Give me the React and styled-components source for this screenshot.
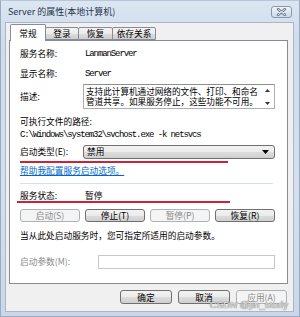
import React from 'react';
import styled, { createGlobalStyle } from 'styled-components';

const GlobalStyle = createGlobalStyle`
  html, body {
    margin: 0;
    padding: 0;
    background: #ffffff;
  }
  body {
    font-family: "Noto Sans CJK SC", "Liberation Sans", sans-serif;
  }
`;

const Window = styled.div`
  position: relative;
  width: 300px;
  height: 317px;
  box-sizing: border-box;
  display: flex;
  flex-direction: column;
  background: linear-gradient(180deg, #dce6f2 0%, #cfdcec 12%, #d4e0ee 60%, #c9d7e8 100%);
  border: 1px solid #9aabc1;
  border-top-color: #b7c6d8;
`;

const TitleBar = styled.div`
  height: 21px;
  flex: none;
  display: flex;
  align-items: center;
  justify-content: space-between;
  padding: 0 7px 0 7px;
`;

const Title = styled.span`
  font-size: 9px;
  color: #27364a;
  white-space: nowrap;
`;

const CloseBtn = styled.div`
  width: 21px;
  height: 12px;
  box-sizing: border-box;
  border: 1px solid #8797ad;
  border-radius: 3px;
  background: linear-gradient(180deg, #f1f5fa 0%, #dde6f1 50%, #cdd9e8 100%);
  display: flex;
  align-items: center;
  justify-content: center;
`;

const Body = styled.div`
  flex: 1;
  display: flex;
  flex-direction: column;
  margin: 0 5px 4px 4px;
  padding: 1px 5px 7px 3px;
  background: #f0f0f0;
  border: 1px solid #a8b6c7;
`;

const TabStrip = styled.div`
  height: 16px;
  flex: none;
  display: flex;
  align-items: flex-end;
  padding-left: 1px;
  position: relative;
  z-index: 2;
`;

const Tab = styled.div`
  width: ${(p) => p.$w}px;
  height: ${(p) => (p.$active ? 17 : 13)}px;
  margin-bottom: ${(p) => (p.$active ? -1 : 0)}px;
  margin-left: ${(p) => (p.$first ? 0 : -1)}px;
  box-sizing: border-box;
  border: 1px solid #898c95;
  border-bottom: ${(p) => (p.$active ? 'none' : '1px solid #898c95')};
  border-radius: 2px 2px 0 0;
  background: ${(p) =>
    p.$active ? '#ffffff' : 'linear-gradient(180deg, #f3f3f3 0%, #ebebeb 50%, #dddddd 51%, #cfcfcf 100%)'};
  font-size: 8.7px;
  color: #000;
  display: flex;
  align-items: ${(p) => (p.$active ? 'flex-start' : 'center')};
  padding-top: ${(p) => (p.$active ? 2 : 0)}px;
  justify-content: center;
  white-space: nowrap;
  overflow: hidden;
`;

const Panel = styled.div`
  flex: 1;
  display: flex;
  flex-direction: column;
  background: #ffffff;
  border: 1px solid #898c95;
  padding: 6px 12px 0 10px;
  font-size: 8.7px;
  color: #000;
  position: relative;
  z-index: 1;
`;

const InfoRow = styled.div`
  display: grid;
  grid-template-columns: 63px 1fr;
  align-items: center;
  min-height: ${(p) => p.$h || 12}px;
  line-height: ${(p) => p.$lh || 12}px;
  margin-top: ${(p) => p.$mt || 0}px;
  white-space: nowrap;
`;

const Label = styled.span`
  color: ${(p) => (p.$disabled ? '#8d8d8d' : '#000')};
`;

const Value = styled.span`
  padding-left: 2px;
`;

const Mono = styled.span`
  font-family: "Liberation Mono", monospace;
  font-size: 9px;
  letter-spacing: -1.1px;
`;

const DescBox = styled.div`
  height: 25px;
  box-sizing: border-box;
  border: 1px solid #abadb3;
  border-top-color: #8e8f8f;
  display: flex;
  padding: 1px 2px 0 2px;
`;

const DescText = styled.div`
  flex: 1;
  font-size: 8.6px;
  line-height: 10px;
  white-space: nowrap;
  overflow: hidden;
`;

const ScrollCol = styled.div`
  width: 9px;
  display: flex;
  flex-direction: column;
  justify-content: space-between;
  align-items: center;
  padding: 3px 0 3px;
`;

const Plain = styled.div`
  line-height: 12px;
  margin-top: ${(p) => p.$mt || 0}px;
  white-space: nowrap;
`;

const Combo = styled.div`
  height: 14px;
  box-sizing: border-box;
  border: 1px solid #707070;
  border-radius: 3px;
  background: linear-gradient(180deg, #f2f2f2 0%, #ebebeb 50%, #dddddd 51%, #cfcfcf 100%);
  display: flex;
  align-items: center;
  justify-content: space-between;
  padding: 0 5px 0 3px;
  line-height: 12px;
`;

const RedMark = styled.div`
  height: 2px;
  width: ${(p) => p.$w}px;
  margin-left: ${(p) => p.$ml || 0}px;
  margin-top: ${(p) => p.$mt || 0}px;
  background: #cf2236;
  flex: none;
`;

const HelpLink = styled.a`
  display: block;
  margin-top: 2px;
  line-height: 12px;
  color: #0066cc;
  text-decoration: underline;
  white-space: nowrap;
`;

const Separator = styled.div`
  height: 1px;
  width: 253px;
  margin-top: 6px;
  background: #d5dfe5;
  flex: none;
`;

const ButtonRow = styled.div`
  display: flex;
  gap: ${(p) => p.$gap || 5}px;
  justify-content: ${(p) => p.$end ? 'flex-end' : 'flex-start'};
  margin-top: ${(p) => p.$mt || 0}px;
  margin-right: ${(p) => p.$mr || 0}px;
  flex: none;
`;

const Button = styled.div`
  width: ${(p) => p.$w}px;
  height: ${(p) => p.$h || 13}px;
  box-sizing: border-box;
  border: 1px solid ${(p) => (p.$disabled ? '#adb2b5' : '#707070')};
  border-radius: 3px;
  background: ${(p) =>
    p.$disabled
      ? '#f4f4f4'
      : 'linear-gradient(180deg, #f2f2f2 0%, #ebebeb 50%, #dddddd 51%, #cfcfcf 100%)'};
  color: ${(p) => (p.$disabled ? '#8a8a8a' : '#000')};
  font-size: 8.7px;
  display: flex;
  align-items: center;
  justify-content: center;
  white-space: nowrap;
`;

const ParamInput = styled.div`
  height: 14px;
  box-sizing: border-box;
  border: 1px solid #c5c7cb;
  background: #ffffff;
`;

const Footer = styled(ButtonRow)`
  margin-top: 6px;
`;

const Watermark = styled.div`
  position: absolute;
  right: 11px;
  bottom: 6px;
  font-family: "Liberation Sans", sans-serif;
  font-size: 9.5px;
  color: #e6e6e6;
  text-shadow: 0 0 1px #6d6d6d, 0 0 1px #6d6d6d;
  letter-spacing: 0.1px;
  white-space: nowrap;
`;

function CloseIcon() {
  return (
    <svg width="11" height="8" viewBox="0 0 11 8">
      <path d="M2 1 L9 7 M9 1 L2 7" stroke="#5f6f86" strokeWidth="2.4" strokeLinecap="round" />
      <path d="M2 1 L9 7 M9 1 L2 7" stroke="#ffffff" strokeWidth="1" strokeLinecap="round" />
    </svg>
  );
}

function Arrow({ up }) {
  return (
    <svg width="5" height="3" viewBox="0 0 5 3">
      <path d={up ? 'M0 3 L2.5 0 L5 3 Z' : 'M0 0 L5 0 L2.5 3 Z'} fill="#333" />
    </svg>
  );
}

function DropArrow() {
  return (
    <svg width="7" height="4" viewBox="0 0 7 4">
      <path d="M0 0 L7 0 L3.5 4 Z" fill="#000" />
    </svg>
  );
}

const tabs = [
  { label: '常规', w: 36, active: true },
  { label: '登录', w: 34 },
  { label: '恢复', w: 35 },
  { label: '依存关系', w: 44 },
];

const controls = [
  { label: '启动(S)', disabled: true },
  { label: '停止(T)' },
  { label: '暂停(P)', disabled: true },
  { label: '恢复(R)' },
];

export default function App() {
  return (
    <>
      <GlobalStyle />
      <Window>
        <TitleBar>
          <Title>Server 的属性(本地计算机)</Title>
          <CloseBtn>
            <CloseIcon />
          </CloseBtn>
        </TitleBar>
        <Body>
          <TabStrip>
            {tabs.map((t, i) => (
              <Tab key={t.label} $w={t.w} $active={t.active} $first={i === 0}>
                {t.label}
              </Tab>
            ))}
          </TabStrip>
          <Panel>
            <InfoRow>
              <Label>服务名称:</Label>
              <Value><Mono>LanmanServer</Mono></Value>
            </InfoRow>
            <InfoRow $mt={7}>
              <Label>显示名称:</Label>
              <Value><Mono>Server</Mono></Value>
            </InfoRow>
            <InfoRow $mt={4} $h={25}>
              <Label>描述:</Label>
              <DescBox>
                <DescText>
                  支持此计算机通过网络的文件、打印、和命名
                  <br />
                  管道共享。如果服务停止，这些功能不可用。
                </DescText>
                <ScrollCol>
                  <Arrow up />
                  <Arrow />
                </ScrollCol>
              </DescBox>
            </InfoRow>
            <Plain $mt={7}>可执行文件的路径:</Plain>
            <Plain>
              <Mono>C:\Windows\system32\svchost.exe -k netsvcs</Mono>
            </Plain>
            <InfoRow $mt={4} $h={14}>
              <Label>启动类型(E):</Label>
              <Combo>
                <span>禁用</span>
                <DropArrow />
              </Combo>
            </InfoRow>
            <RedMark $w={208} $mt={2} />
            <HelpLink>帮助我配置服务启动选项。</HelpLink>
            <Separator />
            <InfoRow $mt={7} $lh={10} $h={10}>
              <Label>服务状态:</Label>
              <Value>暂停</Value>
            </InfoRow>
            <RedMark $w={213} $ml={-3} />
            <ButtonRow $mt={6} $gap={5}>
              {controls.map((c) => (
                <Button key={c.label} $w={60} $disabled={c.disabled}>
                  {c.label}
                </Button>
              ))}
            </ButtonRow>
            <Plain $mt={8}>当从此处启动服务时，您可指定所适用的启动参数。</Plain>
            <InfoRow $mt={13} $h={14} style={{ gridTemplateColumns: '78px 1fr' }}>
              <Label $disabled>启动参数(M):</Label>
              <ParamInput />
            </InfoRow>
          </Panel>
          <Footer $end $gap={6} $mr={1}>
            <Button $w={52} $h={14}>确定</Button>
            <Button $w={52} $h={14}>取消</Button>
            <Button $w={51} $h={14} $disabled>应用(A)</Button>
          </Footer>
        </Body>
        <Watermark>CSDN @jin_study</Watermark>
      </Window>
    </>
  );
}
